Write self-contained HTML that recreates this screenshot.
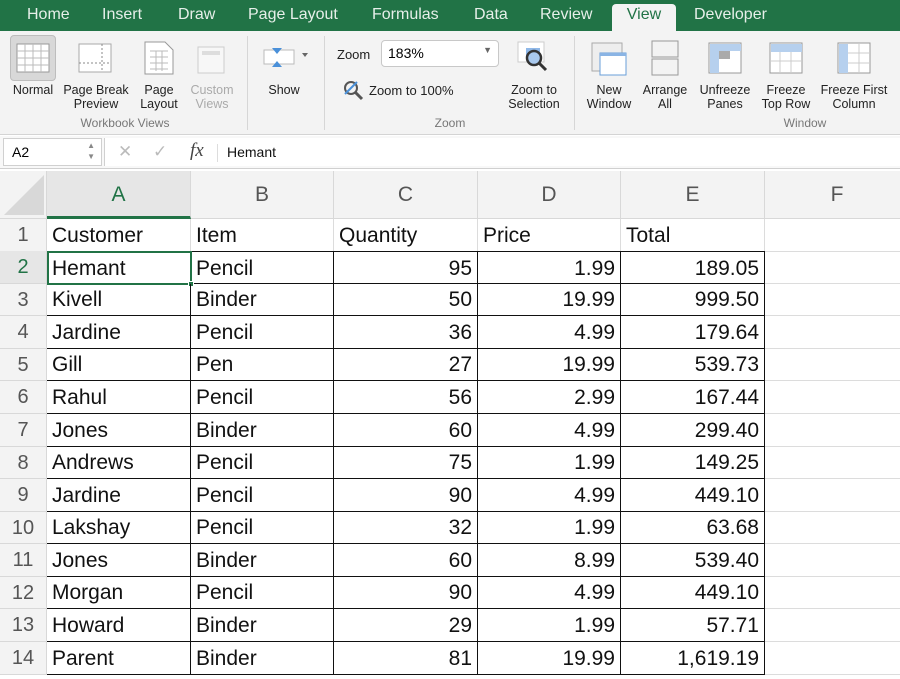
<!DOCTYPE html>
<html><head><meta charset="utf-8"><style>
*{box-sizing:border-box;margin:0;padding:0}
body{width:900px;height:669px;overflow:hidden;background:#fff;font-family:"Liberation Sans",Arial,sans-serif;position:relative}
.tabs{position:absolute;left:0;top:0;width:900px;height:31px;background:#217346}
.tab{position:absolute;top:6px;color:#e6efe9;font-size:16px}
.view{position:absolute;left:612px;top:4px;width:64px;height:28px;background:#f3f3f3;border-radius:4px 4px 0 0;color:#217346;font-size:16px;text-align:center;padding-top:2px}
.ribbon{position:absolute;left:0;top:31px;width:900px;height:104px;background:#f3f3f3;border-bottom:1px solid #d4d4d4}
.lbl{position:absolute;font-size:12.5px;color:#222;text-align:center;line-height:14px}
.grp{position:absolute;font-size:12px;color:#777;text-align:center}
.sep{position:absolute;top:36px;width:1px;height:94px;background:#d6d6d6}
.fbar{position:absolute;left:0;top:136px;width:900px;height:33px;background:#f8f8f8;border-bottom:1px solid #d0d0d0}
.sheet{position:absolute;left:0;top:171px}
.hdr{position:absolute;top:0;height:48px;background:#f3f3f3;border-right:1px solid #d8d8d8;border-bottom:1px solid #d8d8d8;font-size:21px;color:#555;text-align:center;line-height:48px}
.rh{position:absolute;left:0;width:47px;background:#f3f3f3;border-bottom:1px solid #d8d8d8;border-right:1px solid #d8d8d8;font-size:20px;color:#555;text-align:center}
.c{position:absolute;font-size:21px;color:#111;padding:0 5px;white-space:nowrap;border-right:1px solid #dcdcdc;border-bottom:1px solid #dcdcdc}
.r{text-align:right}
.b{border-color:#111}
</style></head><body>
<div class="tabs">
<span class="tab" style="left:27px">Home</span><span class="tab" style="left:102px">Insert</span><span class="tab" style="left:178px">Draw</span><span class="tab" style="left:248px">Page Layout</span><span class="tab" style="left:372px">Formulas</span><span class="tab" style="left:474px">Data</span><span class="tab" style="left:540px">Review</span><span class="tab" style="left:694px">Developer</span>
</div>
<div class="view">View</div>
<div class="ribbon">
<div style="position:absolute;left:10px;top:4px;width:46px;height:46px;background:#d8d8d8;border:1px solid #bdbdbd;border-radius:4px"></div>
<svg style="position:absolute;left:16px;top:12px" width="34" height="30"><rect x="1" y="1" width="32" height="28" fill="#fff" stroke="#999"/><path d="M1 8H33M1 15H33M1 22H33M9 1V29M17 1V29M25 1V29" stroke="#bbb"/></svg>
<svg style="position:absolute;left:78px;top:12px" width="34" height="30"><rect x="1" y="1" width="32" height="28" fill="#fff" stroke="#aaa"/><path d="M1 20H33M24 1V29" stroke="#888" stroke-dasharray="2 2"/></svg>
<svg style="position:absolute;left:144px;top:10px" width="30" height="34"><path d="M1 1H21L29 9V33H1Z" fill="#fff" stroke="#999"/><path d="M6 10H24M6 16H24M6 22H24M6 28H24M12 10V30M18 10V30" stroke="#bbb"/></svg>
<svg style="position:absolute;left:194px;top:10px" width="34" height="34"><rect x="4" y="6" width="26" height="26" fill="#f7f7f7" stroke="#ccc"/><rect x="8" y="10" width="18" height="4" fill="#ddd"/></svg>
<div class="lbl" style="left:6px;top:52px;width:54px">Normal</div>
<div class="lbl" style="left:60px;top:52px;width:72px">Page Break<br>Preview</div>
<div class="lbl" style="left:134px;top:52px;width:50px">Page<br>Layout</div>
<div class="lbl" style="left:184px;top:52px;width:56px;color:#aaa">Custom<br>Views</div>
<div class="grp" style="left:60px;top:85px;width:130px">Workbook Views</div>
<div class="sep" style="left:247px;top:5px"></div>
<svg style="position:absolute;left:262px;top:12px" width="50" height="30"><rect x="2" y="7" width="30" height="14" fill="#fff" stroke="#bbb"/><path d="M10 5H20L15 11Z" fill="#4a90d9"/><path d="M10 24H20L15 18Z" fill="#4a90d9"/><path d="M40 10H46L43 14Z" fill="#666"/></svg>
<div class="lbl" style="left:258px;top:52px;width:52px">Show</div>
<div class="sep" style="left:324px;top:5px"></div>
<div class="lbl" style="left:337px;top:17px;font-size:13px">Zoom</div>
<div style="position:absolute;left:381px;top:9px;width:118px;height:27px;background:#fff;border:1px solid #c8c8c8;border-radius:4px;font-size:14px;padding:4px 6px">183%<span style="position:absolute;right:6px;top:4px;font-size:9px;color:#666">▼</span></div>
<svg style="position:absolute;left:342px;top:48px" width="22" height="22"><circle cx="9" cy="9" r="6" fill="none" stroke="#555" stroke-width="2"/><path d="M13 13L20 20" stroke="#555" stroke-width="3"/><path d="M3 15L15 3" stroke="#4a90d9" stroke-width="2"/></svg>
<div class="lbl" style="left:369px;top:53px;font-size:13px">Zoom to 100%</div>
<svg style="position:absolute;left:516px;top:9px" width="36" height="36"><rect x="2" y="2" width="26" height="20" fill="#fff" stroke="#ccc"/><rect x="10" y="8" width="14" height="12" fill="#8fb8e8"/><circle cx="18" cy="18" r="7" fill="#a9c9ee" stroke="#333" stroke-width="2.5"/><path d="M23 23L30 30" stroke="#333" stroke-width="3"/></svg>
<div class="lbl" style="left:500px;top:52px;width:68px">Zoom to<br>Selection</div>
<div class="grp" style="left:420px;top:85px;width:60px">Zoom</div>
<div class="sep" style="left:574px;top:5px"></div>
<svg style="position:absolute;left:590px;top:10px" width="40" height="36"><rect x="2" y="2" width="30" height="28" fill="#eee" stroke="#aaa"/><rect x="10" y="12" width="26" height="22" fill="#fff" stroke="#6a9fd8"/><rect x="10" y="12" width="26" height="3" fill="#8ab4e4"/></svg>
<svg style="position:absolute;left:650px;top:8px" width="30" height="38"><rect x="2" y="2" width="26" height="16" fill="#f3f3f3" stroke="#999"/><rect x="2" y="20" width="26" height="16" fill="#f3f3f3" stroke="#999"/></svg>
<svg style="position:absolute;left:707px;top:10px" width="36" height="34"><rect x="2" y="2" width="32" height="30" fill="#fff" stroke="#999"/><rect x="3" y="3" width="31" height="7" fill="#b6d0ee"/><rect x="3" y="3" width="9" height="29" fill="#b6d0ee"/><rect x="12" y="10" width="11" height="8" fill="#aaa"/></svg>
<svg style="position:absolute;left:768px;top:10px" width="36" height="34"><rect x="2" y="2" width="32" height="30" fill="#fff" stroke="#999"/><rect x="3" y="3" width="31" height="8" fill="#b6d0ee"/><path d="M2 20H34M12 11V32M23 11V32" stroke="#ccc"/></svg>
<svg style="position:absolute;left:836px;top:10px" width="36" height="34"><rect x="2" y="2" width="32" height="30" fill="#fff" stroke="#999"/><rect x="3" y="3" width="9" height="29" fill="#b6d0ee"/><path d="M12 12H34M12 22H34M23 2V32" stroke="#ccc"/></svg>
<div class="lbl" style="left:583px;top:52px;width:52px">New<br>Window</div>
<div class="lbl" style="left:638px;top:52px;width:54px">Arrange<br>All</div>
<div class="lbl" style="left:693px;top:52px;width:64px">Unfreeze<br>Panes</div>
<div class="lbl" style="left:756px;top:52px;width:60px">Freeze<br>Top Row</div>
<div class="lbl" style="left:816px;top:52px;width:76px">Freeze First<br>Column</div>
<div class="grp" style="left:770px;top:85px;width:70px">Window</div>
</div>
<div class="fbar">
<div style="position:absolute;left:3px;top:2px;width:99px;height:28px;background:#fff;border:1px solid #d0d0d0;font-size:14px;padding:5px 8px">A2<span style="position:absolute;right:6px;top:1px;font-size:8px;color:#888;line-height:11px">▲<br>▼</span></div>
<div style="position:absolute;left:104px;top:2px;width:796px;height:28px;background:#fff;border-left:1px solid #d0d0d0"></div>
<span style="position:absolute;left:118px;top:6px;font-size:17px;color:#bbb">✕</span>
<span style="position:absolute;left:153px;top:6px;font-size:17px;color:#bbb">✓</span>
<span style="position:absolute;left:190px;top:4px;font-size:19px;font-style:italic;font-family:'Liberation Serif',serif;color:#444">fx</span>
<div style="position:absolute;left:217px;top:8px;width:1px;height:18px;background:#ddd"></div>
<span style="position:absolute;left:227px;top:8px;font-size:14px;color:#111">Hemant</span>
</div>
<div class="sheet">
<div class="hdr" style="left:0;width:47px"><svg width="46" height="46" style="position:absolute;left:0;top:0"><path d="M44 4V44H4Z" fill="#d8d8d8"/></svg></div>
<div class="hdr" style="left:47px;width:144px;color:#217346;background:#e6e6e6;border-bottom:3px solid #217346">A</div>
<div class="hdr" style="left:191px;width:143px">B</div>
<div class="hdr" style="left:334px;width:144px">C</div>
<div class="hdr" style="left:478px;width:143px">D</div>
<div class="hdr" style="left:621px;width:144px">E</div>
<div class="hdr" style="left:765px;width:145px">F</div>
</div>
<div id="g" style="position:absolute;left:0;top:219px;width:900px;height:460px">
<div style="position:absolute;left:0;top:0;width:900px;height:33px">
<div class="rh" style="height:33px;line-height:33px;top:0">1</div>
<div class="c" style="left:47px;width:144px;height:33px;line-height:33px">Customer</div><div class="c" style="left:191px;width:143px;height:33px;line-height:33px">Item</div><div class="c" style="left:334px;width:144px;height:33px;line-height:33px">Quantity</div><div class="c" style="left:478px;width:143px;height:33px;line-height:33px">Price</div><div class="c" style="left:621px;width:144px;height:33px;line-height:33px">Total</div><div class="c" style="left:765px;width:140px;height:33px"></div>
</div>
</div>
<div style="position:absolute;left:0;top:251px;width:900px">
<!-- rows 2-14 -->
<div style="position:absolute;top:0px;height:33px;width:900px"><div class="rh" style="height:33px;line-height:33px;color:#217346;background:#e6e6e6">2</div><div class="c b" style="left:47px;width:144px;height:33px;line-height:33px;border-top:1px solid #111">Hemant</div><div class="c b" style="left:191px;width:143px;height:33px;line-height:33px;border-top:1px solid #111">Pencil</div><div class="c b r" style="left:334px;width:144px;height:33px;line-height:33px;border-top:1px solid #111">95</div><div class="c b r" style="left:478px;width:143px;height:33px;line-height:33px;border-top:1px solid #111">1.99</div><div class="c b r" style="left:621px;width:144px;height:33px;line-height:33px;border-top:1px solid #111">189.05</div><div class="c" style="left:765px;width:140px;height:33px"></div></div>
<div style="position:absolute;left:47px;top:0;width:145px;height:34px;border:2px solid #217346"></div>
<div style="position:absolute;left:188px;top:30px;width:6px;height:6px;background:#217346;border:1px solid #fff"></div>
<div style="position:absolute;top:33px;height:32px;width:900px"><div class="rh" style="height:32px;line-height:32px">3</div><div class="c b" style="left:47px;width:144px;height:32px;line-height:32px">Kivell</div><div class="c b" style="left:191px;width:143px;height:32px;line-height:32px">Binder</div><div class="c b r" style="left:334px;width:144px;height:32px;line-height:32px">50</div><div class="c b r" style="left:478px;width:143px;height:32px;line-height:32px">19.99</div><div class="c b r" style="left:621px;width:144px;height:32px;line-height:32px">999.50</div><div class="c" style="left:765px;width:140px;height:32px"></div></div>
<div style="position:absolute;top:65px;height:33px;width:900px"><div class="rh" style="height:33px;line-height:33px">4</div><div class="c b" style="left:47px;width:144px;height:33px;line-height:33px">Jardine</div><div class="c b" style="left:191px;width:143px;height:33px;line-height:33px">Pencil</div><div class="c b r" style="left:334px;width:144px;height:33px;line-height:33px">36</div><div class="c b r" style="left:478px;width:143px;height:33px;line-height:33px">4.99</div><div class="c b r" style="left:621px;width:144px;height:33px;line-height:33px">179.64</div><div class="c" style="left:765px;width:140px;height:33px"></div></div>
<div style="position:absolute;top:98px;height:32px;width:900px"><div class="rh" style="height:32px;line-height:32px">5</div><div class="c b" style="left:47px;width:144px;height:32px;line-height:32px">Gill</div><div class="c b" style="left:191px;width:143px;height:32px;line-height:32px">Pen</div><div class="c b r" style="left:334px;width:144px;height:32px;line-height:32px">27</div><div class="c b r" style="left:478px;width:143px;height:32px;line-height:32px">19.99</div><div class="c b r" style="left:621px;width:144px;height:32px;line-height:32px">539.73</div><div class="c" style="left:765px;width:140px;height:32px"></div></div>
<div style="position:absolute;top:130px;height:33px;width:900px"><div class="rh" style="height:33px;line-height:33px">6</div><div class="c b" style="left:47px;width:144px;height:33px;line-height:33px">Rahul</div><div class="c b" style="left:191px;width:143px;height:33px;line-height:33px">Pencil</div><div class="c b r" style="left:334px;width:144px;height:33px;line-height:33px">56</div><div class="c b r" style="left:478px;width:143px;height:33px;line-height:33px">2.99</div><div class="c b r" style="left:621px;width:144px;height:33px;line-height:33px">167.44</div><div class="c" style="left:765px;width:140px;height:33px"></div></div>
<div style="position:absolute;top:163px;height:33px;width:900px"><div class="rh" style="height:33px;line-height:33px">7</div><div class="c b" style="left:47px;width:144px;height:33px;line-height:33px">Jones</div><div class="c b" style="left:191px;width:143px;height:33px;line-height:33px">Binder</div><div class="c b r" style="left:334px;width:144px;height:33px;line-height:33px">60</div><div class="c b r" style="left:478px;width:143px;height:33px;line-height:33px">4.99</div><div class="c b r" style="left:621px;width:144px;height:33px;line-height:33px">299.40</div><div class="c" style="left:765px;width:140px;height:33px"></div></div>
<div style="position:absolute;top:196px;height:32px;width:900px"><div class="rh" style="height:32px;line-height:32px">8</div><div class="c b" style="left:47px;width:144px;height:32px;line-height:32px">Andrews</div><div class="c b" style="left:191px;width:143px;height:32px;line-height:32px">Pencil</div><div class="c b r" style="left:334px;width:144px;height:32px;line-height:32px">75</div><div class="c b r" style="left:478px;width:143px;height:32px;line-height:32px">1.99</div><div class="c b r" style="left:621px;width:144px;height:32px;line-height:32px">149.25</div><div class="c" style="left:765px;width:140px;height:32px"></div></div>
<div style="position:absolute;top:228px;height:33px;width:900px"><div class="rh" style="height:33px;line-height:33px">9</div><div class="c b" style="left:47px;width:144px;height:33px;line-height:33px">Jardine</div><div class="c b" style="left:191px;width:143px;height:33px;line-height:33px">Pencil</div><div class="c b r" style="left:334px;width:144px;height:33px;line-height:33px">90</div><div class="c b r" style="left:478px;width:143px;height:33px;line-height:33px">4.99</div><div class="c b r" style="left:621px;width:144px;height:33px;line-height:33px">449.10</div><div class="c" style="left:765px;width:140px;height:33px"></div></div>
<div style="position:absolute;top:261px;height:32px;width:900px"><div class="rh" style="height:32px;line-height:32px">10</div><div class="c b" style="left:47px;width:144px;height:32px;line-height:32px">Lakshay</div><div class="c b" style="left:191px;width:143px;height:32px;line-height:32px">Pencil</div><div class="c b r" style="left:334px;width:144px;height:32px;line-height:32px">32</div><div class="c b r" style="left:478px;width:143px;height:32px;line-height:32px">1.99</div><div class="c b r" style="left:621px;width:144px;height:32px;line-height:32px">63.68</div><div class="c" style="left:765px;width:140px;height:32px"></div></div>
<div style="position:absolute;top:293px;height:33px;width:900px"><div class="rh" style="height:33px;line-height:33px">11</div><div class="c b" style="left:47px;width:144px;height:33px;line-height:33px">Jones</div><div class="c b" style="left:191px;width:143px;height:33px;line-height:33px">Binder</div><div class="c b r" style="left:334px;width:144px;height:33px;line-height:33px">60</div><div class="c b r" style="left:478px;width:143px;height:33px;line-height:33px">8.99</div><div class="c b r" style="left:621px;width:144px;height:33px;line-height:33px">539.40</div><div class="c" style="left:765px;width:140px;height:33px"></div></div>
<div style="position:absolute;top:326px;height:32px;width:900px"><div class="rh" style="height:32px;line-height:32px">12</div><div class="c b" style="left:47px;width:144px;height:32px;line-height:32px">Morgan</div><div class="c b" style="left:191px;width:143px;height:32px;line-height:32px">Pencil</div><div class="c b r" style="left:334px;width:144px;height:32px;line-height:32px">90</div><div class="c b r" style="left:478px;width:143px;height:32px;line-height:32px">4.99</div><div class="c b r" style="left:621px;width:144px;height:32px;line-height:32px">449.10</div><div class="c" style="left:765px;width:140px;height:32px"></div></div>
<div style="position:absolute;top:358px;height:33px;width:900px"><div class="rh" style="height:33px;line-height:33px">13</div><div class="c b" style="left:47px;width:144px;height:33px;line-height:33px">Howard</div><div class="c b" style="left:191px;width:143px;height:33px;line-height:33px">Binder</div><div class="c b r" style="left:334px;width:144px;height:33px;line-height:33px">29</div><div class="c b r" style="left:478px;width:143px;height:33px;line-height:33px">1.99</div><div class="c b r" style="left:621px;width:144px;height:33px;line-height:33px">57.71</div><div class="c" style="left:765px;width:140px;height:33px"></div></div>
<div style="position:absolute;top:391px;height:33px;width:900px"><div class="rh" style="height:33px;line-height:33px">14</div><div class="c b" style="left:47px;width:144px;height:33px;line-height:33px">Parent</div><div class="c b" style="left:191px;width:143px;height:33px;line-height:33px">Binder</div><div class="c b r" style="left:334px;width:144px;height:33px;line-height:33px">81</div><div class="c b r" style="left:478px;width:143px;height:33px;line-height:33px">19.99</div><div class="c b r" style="left:621px;width:144px;height:33px;line-height:33px">1,619.19</div><div class="c" style="left:765px;width:140px;height:33px"></div></div>
</div>
</body></html>
